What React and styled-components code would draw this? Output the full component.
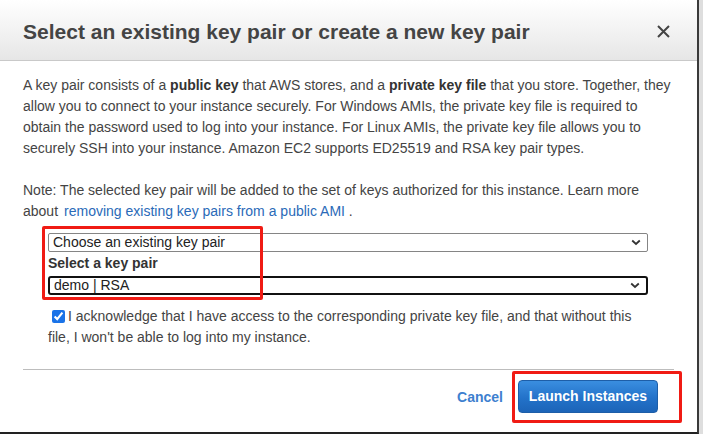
import React from "react";
import styled, { createGlobalStyle } from "styled-components";

const GlobalStyle = createGlobalStyle`
  html, body {
    margin: 0;
    padding: 0;
    background: #dedede;
    font-family: "Liberation Sans", Arial, sans-serif;
  }
  * { box-sizing: border-box; }
`;

const Dialog = styled.div`
  width: 699px;
  height: 434px;
  background: #fff;
  border-right: 2px solid #3a3a3a;
  border-bottom: 2px solid #222;
  display: flex;
  flex-direction: column;
`;

const Header = styled.div`
  height: 61px;
  flex: none;
  display: flex;
  align-items: center;
  justify-content: space-between;
  padding: 3px 27px 0 23px;
  background: linear-gradient(to bottom, #ffffff 0%, #f4f4f4 45%, #e6e6e6 100%);
  border-bottom: 1px solid #c9c9c9;
`;

const Title = styled.h2`
  margin: 0;
  font-size: 21px;
  font-weight: bold;
  color: #444;
`;

const CloseButton = styled.button`
  border: 0;
  background: transparent;
  padding: 0;
  width: 14px;
  height: 14px;
  display: flex;
  align-items: center;
  justify-content: center;
  cursor: pointer;
`;

const Body = styled.div`
  padding: 14px 23px 0;
  color: #444;
  font-size: 14px;
  line-height: 21px;
`;

const Paragraph = styled.p`
  margin: ${(p) => (p.$gap ? "21px" : "0")} 0 0;
  strong { color: #333; }
`;

const Link = styled.a`
  color: #2a6ab8;
  text-decoration: none;
  margin-left: 6px;
`;

const KeyForm = styled.div`
  position: relative;
  margin: 11px 0 0 25px;
  width: 600px;
  display: flex;
  flex-direction: column;
`;

const SelectBox = styled.div`
  height: 19px;
  display: flex;
  align-items: center;
  justify-content: space-between;
  padding: 0 6px 0 4px;
  margin-top: ${(p) => (p.$focused ? "2px" : "0")};
  border: ${(p) => (p.$focused ? "2px solid #111" : "1px solid #858585")};
  border-radius: ${(p) => (p.$focused ? "3px" : "2px")};
  font-size: 14px;
  line-height: 15px;
  color: #222;
  background: #fff;
`;

const FieldLabel = styled.label`
  font-weight: bold;
  color: #333;
  line-height: 22px;
  font-size: 14px;
`;

const Annotation = styled.div`
  position: absolute;
  border: 3px solid #f01b14;
  border-radius: 2px;
  pointer-events: none;
`;

const AckRow = styled.label`
  display: block;
  margin: 11px 0 0 25px;
  width: 600px;
  line-height: 21px;
  color: #444;
`;

const CheckBox = styled.input`
  width: 13px;
  height: 13px;
  margin: 0 3px 0 4px;
  vertical-align: -2px;
  accent-color: #1a73e8;
`;

const Divider = styled.hr`
  margin: 21px 0 0;
  border: 0;
  border-top: 1px solid #bdbdbd;
`;

const Footer = styled.div`
  display: flex;
  justify-content: flex-end;
  align-items: center;
  gap: 15px;
  padding: 10px 16px 0 0;
`;

const CancelButton = styled.button`
  border: 0;
  background: transparent;
  padding: 0;
  font-family: inherit;
  font-size: 14px;
  font-weight: bold;
  color: #3d80cf;
  cursor: pointer;
`;

const ButtonWrap = styled.div`
  position: relative;
`;

const PrimaryButton = styled.button`
  width: 140px;
  height: 33px;
  border: 1px solid #1d5ea8;
  border-radius: 4px;
  background: linear-gradient(to bottom, #3a8ee0 0%, #2372c9 55%, #1c64b8 100%);
  color: #fff;
  font-family: inherit;
  font-size: 14px;
  font-weight: bold;
  padding: 0 0 1px;
  cursor: pointer;
`;

const Chevron = () => (
  <svg width="10" height="7" viewBox="0 0 10 7">
    <path d="M1.2 1.5 L5 5 L8.8 1.5" fill="none" stroke="#333" strokeWidth="1.8" />
  </svg>
);

export default function App() {
  return (
    <>
      <GlobalStyle />
      <Dialog>
        <Header>
          <Title>Select an existing key pair or create a new key pair</Title>
          <CloseButton aria-label="Close">
            <svg width="13" height="13" viewBox="0 0 13 13">
              <path d="M1 1 L12 12 M12 1 L1 12" stroke="#444" strokeWidth="2" />
            </svg>
          </CloseButton>
        </Header>
        <Body>
          <Paragraph>
            A key pair consists of a <strong>public key</strong> that AWS stores, and a{" "}
            <strong>private key file</strong> that you store. Together, they allow you to
            connect to your instance securely. For Windows AMIs, the private key file is
            required to obtain the password used to log into your instance. For Linux AMIs,
            the private key file allows you to securely SSH into your instance. Amazon EC2
            supports ED25519 and RSA key pair types.
          </Paragraph>
          <Paragraph $gap>
            Note: The selected key pair will be added to the set of keys authorized for this
            instance. Learn more about
            <Link href="#">removing existing key pairs from a public AMI</Link> .
          </Paragraph>
          <KeyForm>
            <SelectBox>
              <span>Choose an existing key pair</span>
              <Chevron />
            </SelectBox>
            <FieldLabel>Select a key pair</FieldLabel>
            <SelectBox $focused>
              <span>demo | RSA</span>
              <Chevron />
            </SelectBox>
            <Annotation style={{ left: -6, top: -7, width: 221, height: 74 }} />
          </KeyForm>
          <AckRow>
            <CheckBox type="checkbox" defaultChecked />
            I acknowledge that I have access to the corresponding private key file, and that
            without this file, I won't be able to log into my instance.
          </AckRow>
          <Divider />
          <Footer>
            <CancelButton>Cancel</CancelButton>
            <ButtonWrap>
              <PrimaryButton>Launch Instances</PrimaryButton>
              <Annotation style={{ left: -6, top: -9, width: 170, height: 52 }} />
            </ButtonWrap>
          </Footer>
        </Body>
      </Dialog>
    </>
  );
}
